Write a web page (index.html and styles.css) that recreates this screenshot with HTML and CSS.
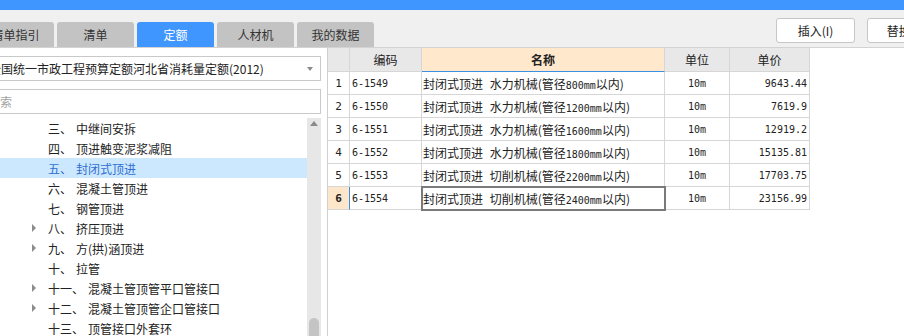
FILE: index.html
```html
<!DOCTYPE html>
<html lang="zh-CN">
<head>
    <meta charset="UTF-8">
    <meta name="viewport" content="width=device-width, initial-scale=1.0">
    <title>定额</title>
    <link rel="stylesheet" href="styles.css">
</head>
<body>
<div class="app">
    <div class="titlebar"></div>

    <div class="toolbar">
        <ul class="tabs">
            <li>清单指引</li>
            <li>清单</li>
            <li class="active">定额</li>
            <li>人材机</li>
            <li>我的数据</li>
        </ul>
        <div class="actions">
            <button>插入(I)</button>
            <button>替换(R)</button>
        </div>
    </div>

    <div class="main">
        <div class="sidebar">
            <div class="select">
                <span>全国统一市政工程预算定额河北省消耗量定额(2012)</span>
                <i class="caret"></i>
            </div>
            <input class="search" type="text" placeholder="搜索">
            <div class="tree-wrap">
                <ul class="tree">
                    <li><i class="toggle"></i><span class="no">三、</span>中继间安拆</li>
                    <li><i class="toggle"></i><span class="no">四、</span>顶进触变泥浆减阻</li>
                    <li class="active"><i class="toggle"></i><span class="no">五、</span>封闭式顶进</li>
                    <li><i class="toggle"></i><span class="no">六、</span>混凝土管顶进</li>
                    <li><i class="toggle"></i><span class="no">七、</span>钢管顶进</li>
                    <li class="folder"><i class="toggle"></i><span class="no">八、</span>挤压顶进</li>
                    <li class="folder"><i class="toggle"></i><span class="no">九、</span>方(拱)涵顶进</li>
                    <li><i class="toggle"></i><span class="no">十、</span>拉管</li>
                    <li class="folder"><i class="toggle"></i><span class="no">十一、</span>混凝土管顶管平口管接口</li>
                    <li class="folder"><i class="toggle"></i><span class="no">十二、</span>混凝土管顶管企口管接口</li>
                    <li><i class="toggle"></i><span class="no">十三、</span>顶管接口外套环</li>
                </ul>
                <div class="scrollbar"><i class="up"></i><i class="thumb"></i></div>
            </div>
        </div>

        <div class="panel">
            <table class="grid">
                <colgroup>
                    <col class="c-no">
                    <col class="c-code">
                    <col class="c-name">
                    <col class="c-unit">
                    <col class="c-price">
                </colgroup>
                <thead>
                    <tr>
                        <th></th>
                        <th>编码</th>
                        <th class="sorted">名称</th>
                        <th>单位</th>
                        <th>单价</th>
                    </tr>
                </thead>
                <tbody>
                    <tr>
                        <td class="num">1</td>
                        <td class="en">6-1549</td>
                        <td class="name">封闭式顶进 水力机械(管径<span class="en">800mm</span>以内)</td>
                        <td class="en center">10m</td>
                        <td class="en right">9643.44</td>
                    </tr>
                    <tr>
                        <td class="num">2</td>
                        <td class="en">6-1550</td>
                        <td class="name">封闭式顶进 水力机械(管径<span class="en">1200mm</span>以内)</td>
                        <td class="en center">10m</td>
                        <td class="en right">7619.9</td>
                    </tr>
                    <tr>
                        <td class="num">3</td>
                        <td class="en">6-1551</td>
                        <td class="name">封闭式顶进 水力机械(管径<span class="en">1600mm</span>以内)</td>
                        <td class="en center">10m</td>
                        <td class="en right">12919.2</td>
                    </tr>
                    <tr>
                        <td class="num">4</td>
                        <td class="en">6-1552</td>
                        <td class="name">封闭式顶进 水力机械(管径<span class="en">1800mm</span>以内)</td>
                        <td class="en center">10m</td>
                        <td class="en right">15135.81</td>
                    </tr>
                    <tr>
                        <td class="num">5</td>
                        <td class="en">6-1553</td>
                        <td class="name">封闭式顶进 切削机械(管径<span class="en">2200mm</span>以内)</td>
                        <td class="en center">10m</td>
                        <td class="en right">17703.75</td>
                    </tr>
                    <tr class="current">
                        <td class="num">6</td>
                        <td class="en">6-1554</td>
                        <td class="name focus">封闭式顶进 切削机械(管径<span class="en">2400mm</span>以内)</td>
                        <td class="en center">10m</td>
                        <td class="en right">23156.99</td>
                    </tr>
                </tbody>
            </table>
        </div>
    </div>
</div>
</body>
</html>
```

FILE: styles.css
```css
* {
    box-sizing: border-box;
}

body {
    margin: 0;
    overflow: hidden;
    font-family: "Noto Sans CJK SC", sans-serif;
    font-size: 12px;
    color: #222;
    background-color: #fff;
}

.app {
    margin-left: -24px;
    width: 928px;
    height: 336px;
    display: flex;
    flex-direction: column;
}

.titlebar {
    height: 10px;
    background-color: #4096ff;
}

/* tabs + buttons */
.toolbar {
    height: 38px;
    flex: none;
    display: flex;
    align-items: flex-start;
    background-color: #f0f0f0;
    border-bottom: 1px solid #d3d3d3;
}

.tabs {
    display: flex;
    gap: 3px;
    list-style: none;
    margin: 12px 0 0 1px;
    padding: 0;
}

.tabs li {
    width: 77px;
    height: 25px;
    line-height: 25px;
    text-align: center;
    background-color: #c3c3c3;
    border-radius: 3px 3px 0 0;
    color: #333;
}

.tabs li.active {
    background-color: #4096ff;
    color: #fff;
}

.actions {
    display: flex;
    gap: 12px;
    margin: 8px -42px 0 auto;
}

.actions button {
    width: 79px;
    height: 25px;
    padding: 0;
    background-color: #fff;
    border: 1px solid #c6c6c6;
    border-radius: 3px;
    font-family: "Noto Sans CJK SC", sans-serif;
    font-size: 12px;
    color: #222;
}

.main {
    flex: 1;
    display: flex;
    min-height: 0;
}

/* left side */
.sidebar {
    width: 345px;
    flex: none;
    display: flex;
    flex-direction: column;
    padding: 8px 0 0 8px;
}

.select {
    height: 25px;
    flex: none;
    display: flex;
    align-items: center;
    justify-content: space-between;
    padding: 0 7px 0 4px;
    border: 1px solid #c9c9c9;
    white-space: nowrap;
}

.caret {
    width: 0;
    height: 0;
    border-top: 4px solid #8a8a8a;
    border-left: 3px solid transparent;
    border-right: 3px solid transparent;
}

.search {
    height: 25px;
    flex: none;
    margin: 8px 0 0;
    padding: 0 3px;
    border: 1px solid #c9c9c9;
    font-family: "Noto Sans CJK SC", sans-serif;
    font-size: 12px;
    outline: none;
}

.search::placeholder {
    color: #a3a3a3;
}

.tree-wrap {
    flex: 1;
    min-height: 0;
    display: flex;
    margin-top: 4px;
}

.tree {
    flex: 1;
    list-style: none;
    margin: 0;
    padding: 0;
    overflow: hidden;
}

.tree li {
    height: 20px;
    display: flex;
    align-items: center;
    padding-left: 48px;
    white-space: nowrap;
}

.tree li.active {
    background-color: #cce8ff;
    color: #2f6fcf;
}

.toggle {
    width: 16px;
    flex: none;
}

.folder .toggle::before {
    content: "";
    display: block;
    width: 0;
    height: 0;
    border-left: 4px solid #8c8c8c;
    border-top: 4px solid transparent;
    border-bottom: 4px solid transparent;
}

.no {
    margin-right: 4px;
}

.scrollbar {
    width: 14px;
    flex: none;
    display: flex;
    flex-direction: column;
    align-items: center;
    justify-content: space-between;
    background-color: #e7e7e7;
}

.scrollbar .up {
    margin-top: 3px;
    width: 0;
    height: 0;
    border-bottom: 5px solid #8a8a8a;
    border-left: 4px solid transparent;
    border-right: 4px solid transparent;
}

.scrollbar .thumb {
    width: 10px;
    height: 18px;
    background-color: #c4c4c4;
    border-radius: 5px 5px 0 0;
}

/* right side grid */
.panel {
    flex: 1;
    margin-left: 6px;
    border-left: 1px solid #cfcfcf;
}

.grid {
    border-collapse: separate;
    border-spacing: 0;
    table-layout: fixed;
    width: 482px;
}

.c-no { width: 22px; }
.c-code { width: 72px; }
.c-name { width: 243px; }
.c-unit { width: 65px; }
.c-price { width: 80px; }

.grid th,
.grid td {
    padding: 0 2px;
    border-right: 1px solid #d6d6d6;
    border-bottom: 1px solid #d6d6d6;
    white-space: nowrap;
    overflow: hidden;
    text-align: left;
}

.grid thead tr {
    height: 24px;
}

.grid tbody tr {
    height: 23px;
}

.grid th {
    background-color: #e8e8e8;
    font-weight: normal;
    text-align: center;
}

.grid th.sorted {
    background-color: #ffe8cc;
    font-weight: bold;
    border-bottom-color: #3d8fe6;
}

.grid .en {
    font-family: "DejaVu Sans Mono", monospace;
    font-size: 10px;
}

.grid .num {
    text-align: center;
    font-family: "DejaVu Sans Mono", monospace;
    font-size: 11px;
}

.grid .name {
    padding-left: 1px;
    word-spacing: 4px;
}

.grid .center {
    text-align: center;
}

.grid .right {
    text-align: right;
}

.grid tr.current .num {
    background-color: #fde6c9;
    font-weight: bold;
    border-right-color: #3d8fe6;
}

.grid td.focus {
    outline: 2px solid #7a7a7a;
    outline-offset: -1px;
}
```
